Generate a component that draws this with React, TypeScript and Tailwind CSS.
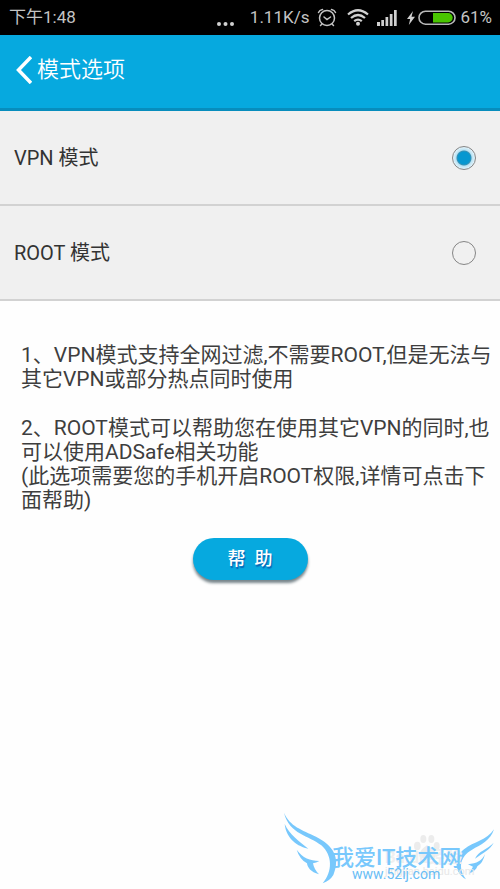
import { useState } from "react";

function AlarmIcon() {
  return (
    <svg width="20" height="19" viewBox="0 0 20 19" fill="none" stroke="#c4c4c4" strokeWidth="1.5" strokeLinecap="round" aria-hidden="true">
      <circle cx="10" cy="10" r="7.5" />
      <path d="M7 9l3 2.5L13.500 9M1.500 4.500Q2.500 2 5.500 1.500M18.500 4.500Q17.500 2 14.500 1.500M5 16l-1.500 1.500M15 16l1.500 1.500" />
    </svg>
  );
}

function WifiIcon() {
  return (
    <svg width="22" height="17" viewBox="0 0 22 17" fill="none" stroke="#d0d0d0" strokeWidth="2.2" aria-hidden="true">
      <path d="M1 5.500Q11-3 21 5.500M4 9Q11 3 18 9M7.200 12.200Q11 9 14.800 12.200" />
      <circle cx="11" cy="14.800" r="2" fill="#d0d0d0" stroke="none" />
    </svg>
  );
}

function SignalIcon() {
  return (
    <svg width="20" height="16" viewBox="0 0 20 16" fill="#d0d0d0" aria-hidden="true">
      <path d="M0 12h3v4H0zM4.300 10h2.700v6H4.300zM8.500 7h2.700v9H8.500zM12.800 4h2.700v12h-2.700zM17 0h2.700v16H17z" />
    </svg>
  );
}

function BatteryIcon() {
  return (
    <svg width="49" height="16" viewBox="0 0 49 16" aria-hidden="true">
      <path d="M6 1L0 9h3.200L1.800 15 8 6.800H4.500z" fill="#d0d0d0" />
      <rect x="12" y="1.200" width="36" height="13" rx="6.500" fill="none" stroke="#b8b8b8" strokeWidth="1.600" />
      <path d="M26 3h15a4.700 4.700 0 010 9.400H26z" fill="#49c500" />
    </svg>
  );
}

function StatusBar() {
  return (
    <div className="flex h-[35px] items-center justify-between bg-black pr-2 pl-[9px] text-[17px] text-[#c4c4c4]">
      <span>下午1:48</span>
      <div className="flex items-center">
        <svg className="mt-3 mr-4" width="17" height="4" viewBox="0 0 17 4" fill="#d0d0d0" aria-hidden="true">
          <circle cx="2" cy="2" r="2" />
          <circle cx="8.500" cy="2" r="2" />
          <circle cx="15" cy="2" r="2" />
        </svg>
        <span className="mr-2">1.11K/s</span>
        <AlarmIcon />
        <span className="ml-[10px]"><WifiIcon /></span>
        <span className="ml-2"><SignalIcon /></span>
        <span className="mr-1 ml-[10px]"><BatteryIcon /></span>
        <span>61%</span>
      </div>
    </div>
  );
}

type OptionProps = { label: string; checked: boolean; onSelect: () => void };

function ModeOption({ label, checked, onSelect }: OptionProps) {
  return (
    <label className="flex h-[95px] items-center justify-between border-b-2 border-[#d2d2d2] bg-[#f0f0f0] pr-6 pl-[14px] text-[20px] text-[#333]">
      <span>{label}</span>
      <input
        type="radio"
        name="mode"
        checked={checked}
        onChange={onSelect}
        className="size-6 appearance-none rounded-full border border-[#858585] checked:bg-[radial-gradient(circle,#0797d0_6px,#3a92b5_7px,#b9e2f3_8px,#e4f3fa_11px)]"
      />
    </label>
  );
}

function Watermark() {
  return (
    <div className="pointer-events-none absolute right-0 bottom-0 h-[89px] w-[230px]" aria-hidden="true">
      <svg className="absolute inset-0" width="230" height="89" viewBox="0 0 690 267">
        <g fill="#ececec">
          <ellipse cx="442" cy="138" rx="10" ry="13" />
          <ellipse cx="460" cy="117" rx="9" ry="12" />
          <ellipse cx="484" cy="117" rx="9" ry="12" />
          <ellipse cx="500" cy="138" rx="9" ry="12" />
          <path d="M471 136C450 148 440 170 455 174h36c16-5 0-28-20-38z" />
        </g>
        <g fill="#78c8fc">
          <path d="M42 38C60 80 96 89 138 110C190 137 212 172 190 225Q180 242 158 250C188 215 188 166 154 136C118 106 58 104 42 38z" />
          <path d="M44 72C58 104 88 124 115 146C84 140 49 118 44 72z" />
          <path d="M80 149C98 174 120 182 148 183Q138 188 129 190Q132 208 147 223C122 217 112 201 111 190Q89 178 80 149z" />
          <path d="M672 88C661 122 634 133 605 150C572 169 562 202 588 238C551 218 552 171 582 148C612 124 650 122 672 88z" />
          <path d="M671 128C660 150 639 158 615 176C624 153 653 148 671 128z" />
          <path d="M645 162C637 182 620 190 594 193L609 200 596 222C612 215 620 207 622 199Q639 189 645 162z" />
        </g>
      </svg>
      <span className="absolute top-[49px] left-[115px] text-[17px] leading-none font-bold whitespace-nowrap text-[#efefef]">Baidu经验</span>
      <span className="absolute top-[66px] left-[115px] text-[11px] leading-none text-[#e8e8e8]">jingyan.baidu.com</span>
      <span className="absolute top-[47px] left-[62px] text-[22px] leading-none font-medium whitespace-nowrap text-[#78c8fc]">我爱IT技术网</span>
      <span className="absolute top-[67px] left-[82px] text-[14px] leading-none text-[#68bdf5]">www.52ij.com</span>
    </div>
  );
}

export default function App() {
  const [mode, setMode] = useState("vpn");
  return (
    <div className="relative flex min-h-screen flex-col bg-[#fefefe] font-[Roboto,'Noto_Sans_CJK_SC',sans-serif]">
      <StatusBar />
      <header className="flex h-[76px] items-center border-b-[3px] border-[#078dbd] bg-[#06a9df] pb-1 pl-4 text-white">
        <button type="button" className="flex items-center text-[22px] font-[350]">
          <svg className="mr-[5px]" width="16" height="28" viewBox="0 0 16 28" fill="none" stroke="white" strokeWidth="3.500" aria-hidden="true">
            <path d="M15 1L2.500 14l12.500 13" />
          </svg>
          <h1>模式选项</h1>
        </button>
      </header>
      <ModeOption label="VPN 模式" checked={mode === "vpn"} onSelect={() => setMode("vpn")} />
      <ModeOption label="ROOT 模式" checked={mode === "root"} onSelect={() => setMode("root")} />
      <main className="flex flex-col pt-[42px] pr-1 pl-[21px] text-[21px] leading-6 text-[#3e3e3e]">
        <p>
          1、VPN模式支持全网过滤,不需要ROOT,但是无法与<br />其它VPN或部分热点同时使用
        </p>
        <p className="mt-[25px]">
          2、ROOT模式可以帮助您在使用其它VPN的同时,也<br />可以使用ADSafe相关功能<br />(此选项需要您的手机开启ROOT权限,详情可点击下<br />面帮助)
        </p>
        <button type="button" className="mt-[26px] mr-[17px] h-[42px] w-[115px] self-center rounded-full bg-[#06a9df] text-[18px] font-medium text-white shadow-[0_3px_3px_#77858b] text-shadow-[1px_2px_1px_#0765b5]">
          帮&nbsp;&nbsp;助
        </button>
      </main>
      <Watermark />
    </div>
  );
}
